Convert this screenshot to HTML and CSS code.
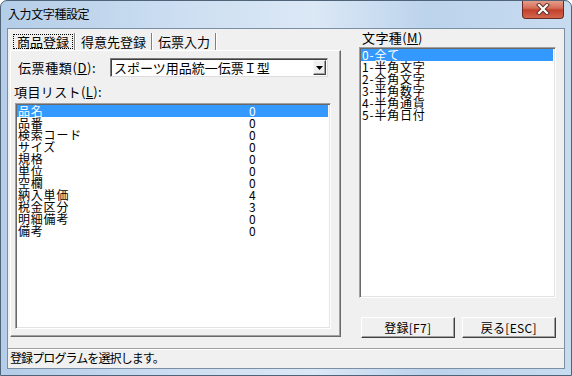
FILE: index.html
```html
<!DOCTYPE html>
<html lang="ja">
<head>
    <meta charset="UTF-8">
    <meta name="viewport" content="width=device-width, initial-scale=1.0">
    <title>入力文字種設定</title>
    <link rel="stylesheet" href="styles.css">
</head>
<body>
    <div class="window">
        <div class="titlebar">
            <span class="title">入力文字種設定</span>
            <span class="close">
                <svg width="14" height="12" viewBox="0 0 14 12">
                    <path d="M3 2 L11 10 M11 2 L3 10" stroke="#5a2a22" stroke-width="4" stroke-linecap="square"/>
                    <path d="M3 2 L11 10 M11 2 L3 10" stroke="#ffffff" stroke-width="2.2" stroke-linecap="square"/>
                </svg>
            </span>
        </div>

        <div class="client">
            <div class="main">
                <div class="left-pane">
                    <div class="tabs">
                        <span class="tab active"><span class="tab-label">商品登録</span></span>
                        <span class="tab"><span class="tab-label">得意先登録</span></span>
                        <span class="tab"><span class="tab-label">伝票入力</span></span>
                    </div>
                    <div class="panel">
                        <div class="field-row">
                            <span class="field-label">伝票種類(<u>D</u>):</span>
                            <div class="combo">
                                <span class="combo-text">スポーツ用品統一伝票Ｉ型</span>
                                <span class="combo-btn">
                                    <svg width="7" height="4" viewBox="0 0 7 4"><path d="M0 0 H7 L3.5 4 Z" fill="#000"/></svg>
                                </span>
                            </div>
                        </div>
                        <div class="list-label">項目リスト(<u>L</u>):</div>
                        <div class="listbox items">
                            <div class="row selected"><span>品名</span><span>0</span></div>
                            <div class="row"><span>品番</span><span>0</span></div>
                            <div class="row"><span>検索コード</span><span>0</span></div>
                            <div class="row"><span>サイズ</span><span>0</span></div>
                            <div class="row"><span>規格</span><span>0</span></div>
                            <div class="row"><span>単位</span><span>0</span></div>
                            <div class="row"><span>空欄</span><span>0</span></div>
                            <div class="row"><span>納入単価</span><span>4</span></div>
                            <div class="row"><span>税金区分</span><span>3</span></div>
                            <div class="row"><span>明細備考</span><span>0</span></div>
                            <div class="row"><span>備考</span><span>0</span></div>
                        </div>
                    </div>
                </div>

                <div class="right-pane">
                    <div class="list-label">文字種(<u>M</u>)</div>
                    <div class="listbox types">
                        <div class="row selected">0-全て</div>
                        <div class="row">1-半角文字</div>
                        <div class="row">2-全角文字</div>
                        <div class="row">3-半角数字</div>
                        <div class="row">4-半角通貨</div>
                        <div class="row">5-半角日付</div>
                    </div>
                    <div class="buttons">
                        <button class="btn">登録[F7]</button>
                        <button class="btn">戻る[ESC]</button>
                    </div>
                </div>
            </div>
            <div class="statusbar">登録プログラムを選択します。</div>
        </div>
    </div>
</body>
</html>
```

FILE: styles.css
```css
body {
    margin: 0;
    padding: 0;
    background-color: #ffffff;
    font-family: "Noto Sans CJK JP", sans-serif;
    color: #000;
}

.window {
    width: 572px;
    height: 376px;
    box-sizing: border-box;
    border: 1px solid #4f6379;
    border-radius: 7px 7px 0 0;
    background: linear-gradient(to right, #b4cde8 0%, #cfe0f2 35%, #dbe8f6 55%, #bcd3ec 75%, #c8dcf0 100%);
    display: flex;
    flex-direction: column;
    overflow: hidden;
}

/* タイトルバー */
.titlebar {
    height: 27px;
    display: flex;
    justify-content: space-between;
    align-items: flex-start;
    padding-left: 7px;
    padding-right: 7px;
}

.title {
    font-size: 12px;
    line-height: 14px;
    margin-top: 6px;
    letter-spacing: -0.4px;
}

.close {
    width: 42px;
    height: 19px;
    margin-top: -1px;
    box-sizing: border-box;
    border: 1px solid #6b2b22;
    border-top: none;
    border-radius: 0 0 4px 4px;
    background: linear-gradient(#e7a391 0%, #d56d58 45%, #c3402b 55%, #d2674e 100%);
    display: flex;
    justify-content: center;
    align-items: center;
}

/* クライアント領域 */
.client {
    margin: 0 6px 6px 6px;
    flex: 1;
    border: 1px solid #7b8ea4;
    background-color: #f0f0f0;
    display: flex;
    flex-direction: column;
    font-size: 13px;
}

.main {
    flex: 1;
    display: flex;
}

.left-pane {
    margin-left: 2px;
    width: 331px;
    display: flex;
    flex-direction: column;
}

.tabs {
    height: 21px;
    display: flex;
    align-items: flex-end;
    padding-left: 3px;
    box-sizing: border-box;
}

.tab {
    height: 17px;
    padding: 0 1px 0 0;
    border-right: 1px solid #808080;
    box-shadow: 1px 0 0 #ffffff;
    margin-right: 2px;
    display: flex;
    align-items: flex-start;
}

.tab-label {
    display: block;
    padding: 0 3px;
    line-height: 13px;
    height: 13px;
    margin-top: 1px;
    border: 1px solid transparent;
}

.tab.active .tab-label {
    border: 1px dotted #000;
}

.panel {
    height: 287px;
    box-sizing: border-box;
    border-top: 1px solid #ffffff;
    border-left: 1px solid #ffffff;
    border-right: 1px solid #696969;
    border-bottom: 1px solid #696969;
    box-shadow: inset -1px -1px 0 #a0a0a0;
}

.field-row {
    display: flex;
    align-items: center;
    margin-top: 7px;
    padding-left: 7px;
}

.field-label {
    width: 92px;
    line-height: 14px;
    letter-spacing: 0.6px;
}

.combo {
    width: 218px;
    height: 19px;
    box-sizing: border-box;
    background-color: #ffffff;
    border-top: 1px solid #7a7a7a;
    border-left: 1px solid #7a7a7a;
    border-right: 1px solid #dcdcdc;
    border-bottom: 1px solid #dcdcdc;
    box-shadow: inset 1px 1px 0 #404040;
    display: flex;
    align-items: center;
    justify-content: space-between;
}

.combo-text {
    padding-left: 3px;
    line-height: 14px;
}

.combo-btn {
    width: 13px;
    height: 15px;
    margin-right: 1px;
    box-sizing: border-box;
    background-color: #f0f0f0;
    border-top: 1px solid #f8f8f8;
    border-left: 1px solid #f8f8f8;
    border-right: 1px solid #404040;
    border-bottom: 1px solid #404040;
    box-shadow: inset -1px -1px 0 #a0a0a0;
    display: flex;
    justify-content: center;
    align-items: center;
}

.list-label {
    line-height: 14px;
    padding-left: 3px;
    letter-spacing: 0.4px;
}

.left-pane .list-label {
    margin-top: 8px;
}

.right-pane .list-label {
    margin-top: 2px;
}

.listbox {
    box-sizing: border-box;
    background-color: #ffffff;
    border-top: 1px solid #a0a0a0;
    border-left: 1px solid #a0a0a0;
    border-right: 1px solid #ffffff;
    border-bottom: 1px solid #ffffff;
    box-shadow: inset 1px 1px 0 #696969, inset -1px -1px 0 #e3e3e3;
    padding: 1px 2px 1px 1px;
    overflow: hidden;
}

.listbox.items {
    margin-top: 4px;
    margin-left: 4px;
    width: 316px;
    height: 226px;
}

.listbox.types {
    margin-top: 2px;
    width: 197px;
    height: 251px;
}

.row {
    height: 12px;
    font-size: 12px;
    line-height: 12px;
    letter-spacing: 0.8px;
    padding-left: 1px;
    white-space: nowrap;
}

.items .row {
    display: grid;
    grid-template-columns: 231px 1fr;
}

.row.selected {
    background-color: #3399ff;
    color: #ffffff;
}

.right-pane {
    margin-left: 18px;
    width: 197px;
    display: flex;
    flex-direction: column;
}

.buttons {
    margin-top: 19px;
    padding-left: 2px;
    display: flex;
    gap: 7px;
}

.btn {
    width: 94px;
    height: 21px;
    padding: 0;
    font-family: "Noto Sans CJK JP", sans-serif;
    font-size: 12px;
    line-height: 14px;
    letter-spacing: 0.3px;
    color: #000;
    background-color: #f0f0f0;
    border-top: 1px solid #ffffff;
    border-left: 1px solid #ffffff;
    border-right: 1px solid #404040;
    border-bottom: 1px solid #404040;
    box-shadow: inset -1px -1px 0 #a0a0a0;
}

.btn + .btn {
    width: 95px;
}

.statusbar {
    height: 20px;
    box-sizing: border-box;
    border-top: 1px solid #a0a0a0;
    box-shadow: inset 0 1px 0 #ffffff;
    padding-left: 2px;
    font-size: 12px;
    line-height: 18px;
    letter-spacing: -0.9px;
}
```
